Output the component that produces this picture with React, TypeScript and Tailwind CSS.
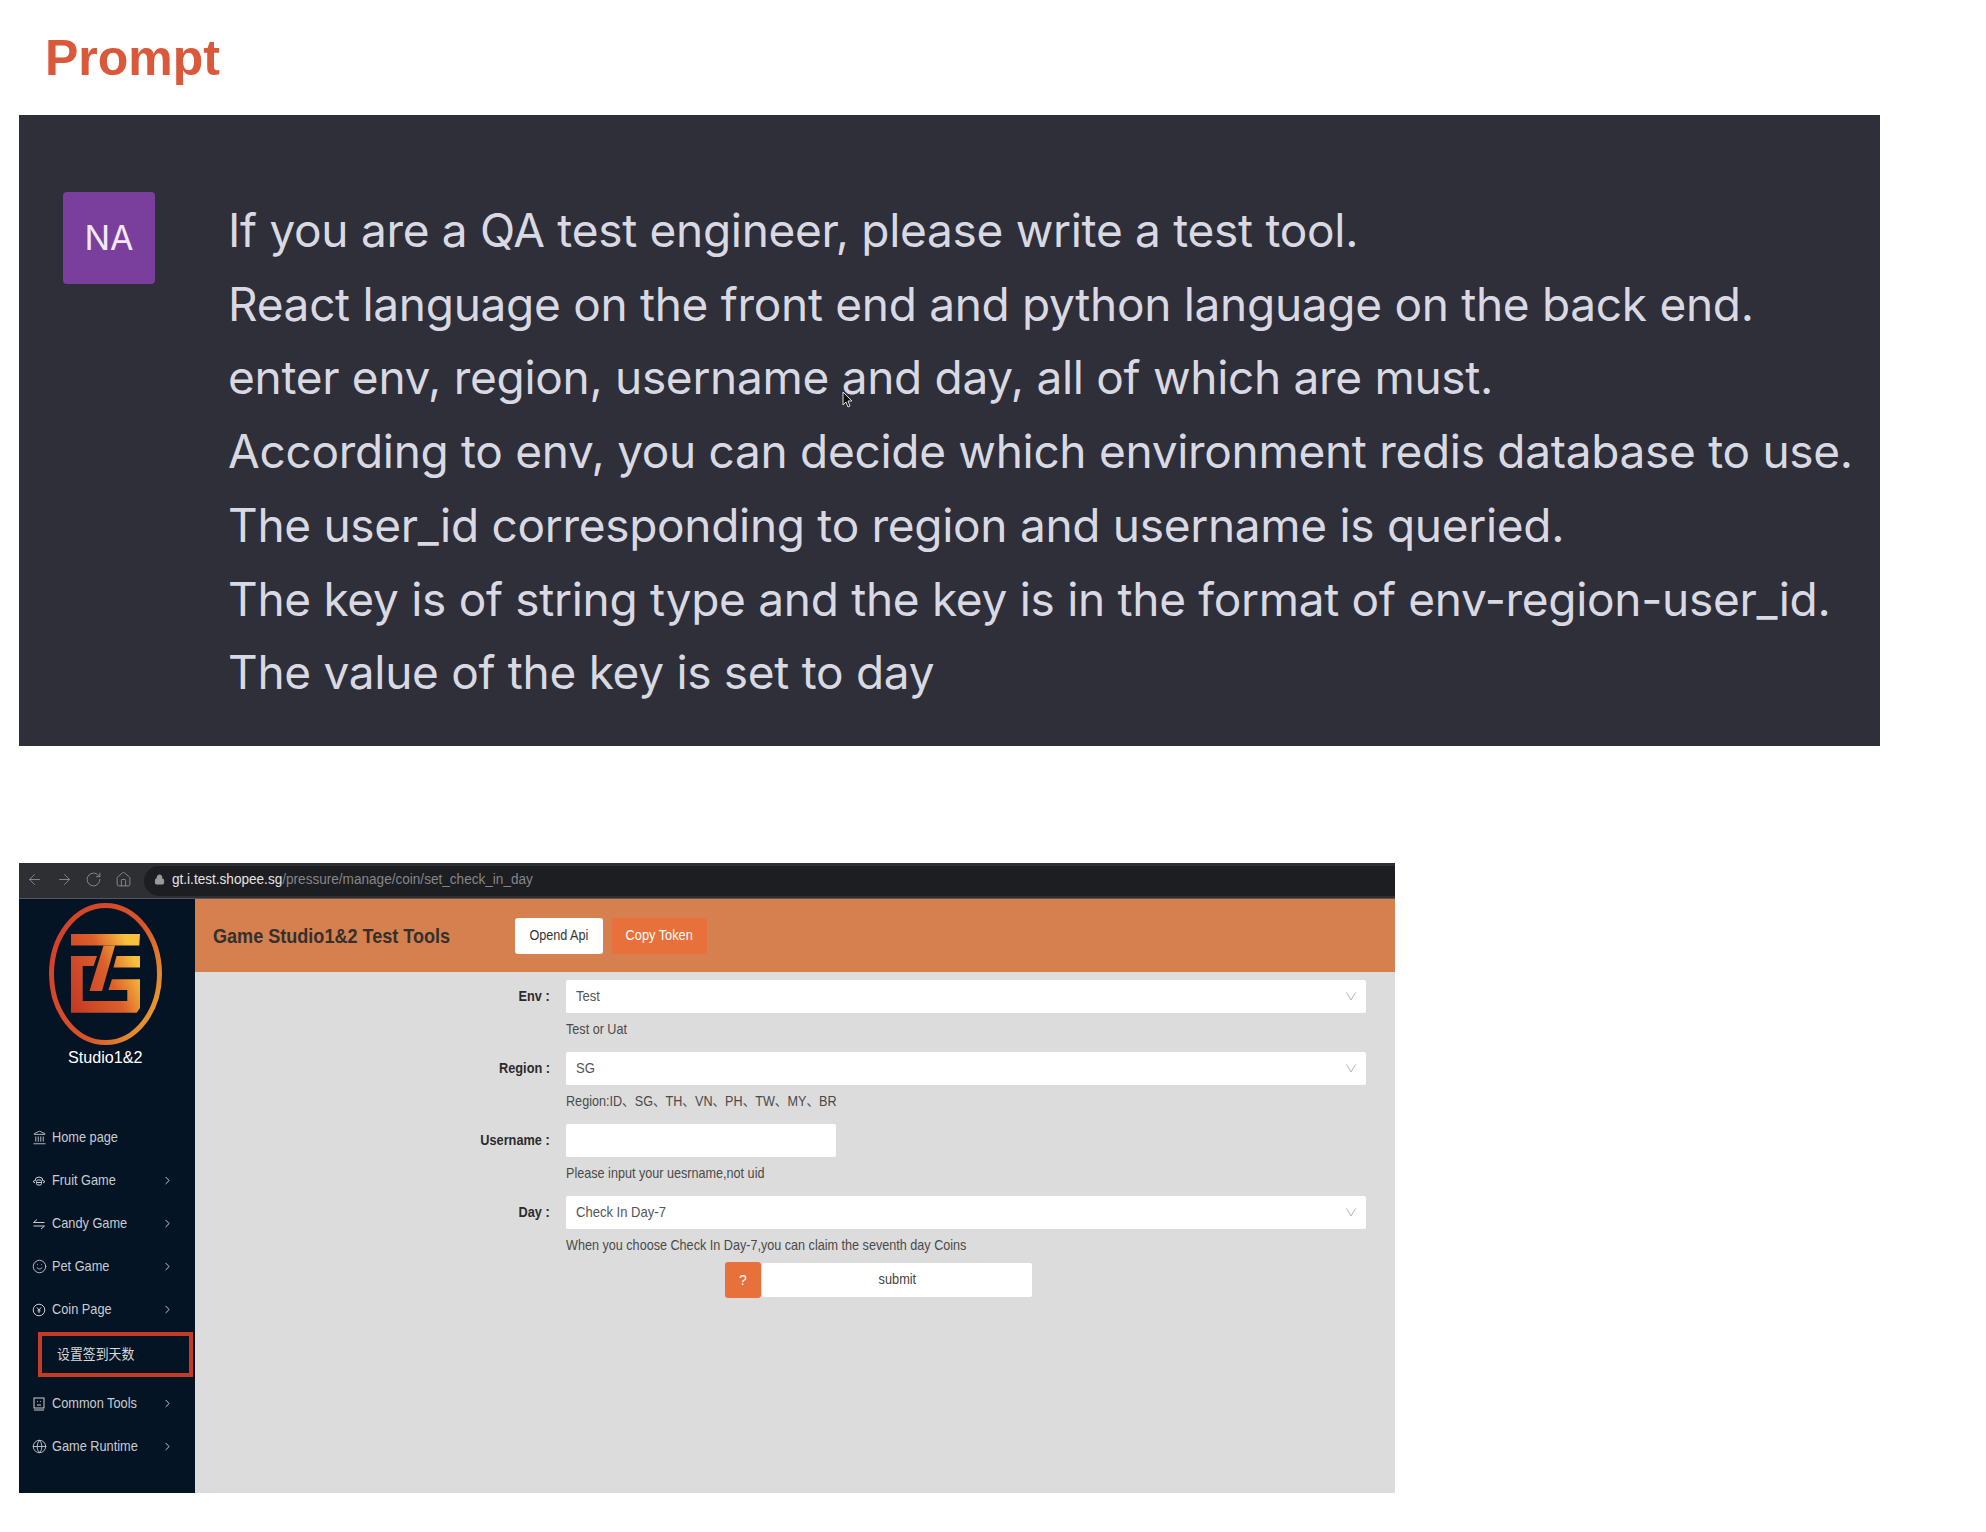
import { ArrowLeft, ArrowRight, ChevronRight, Globe, House, Landmark, Lock, RotateCw, Smile } from "lucide-react";
import type { ReactNode } from "react";

const PROMPT_LINES = [
  "If you are a QA test engineer, please write a test tool.",
  "React language on the front end and python language on the back end.",
  "enter env, region, username and day, all of which are must.",
  "According to env, you can decide which environment redis database to use.",
  "The user_id corresponding to region and username is queried.",
  "The key is of string type and the key is in the format of env-region-user_id.",
  "The value of the key is set to day",
];

function FruitIcon() {
  return (
    <svg viewBox="0 0 14 14" className="h-[14px] w-[14px]" fill="none" stroke="currentColor" strokeWidth="1">
      <path d="M3 7a4 4 0 0 1 8 0" />
      <path d="M3 6.5 1 7.5 3 9M11 6.5l2 1L11 9" />
      <rect x="4.5" y="6" width="5" height="5" rx="1.5" />
      <path d="M4.5 8.5h5" />
    </svg>
  );
}

function CandyIcon() {
  return (
    <svg viewBox="0 0 14 14" className="h-[14px] w-[14px]" fill="none" stroke="currentColor" strokeWidth="1">
      <path d="M1.5 5.5h11M1.5 5.5 5 2.5M1.5 9h11M12.5 9 9 12" />
    </svg>
  );
}

function CoinIcon() {
  return (
    <svg viewBox="0 0 14 14" className="h-[14px] w-[14px]" fill="none" stroke="currentColor" strokeWidth="1">
      <circle cx="7" cy="7" r="5.8" />
      <path d="M5 4.5 7 7l2-2.5M7 7v3M5.5 7.8h3" />
    </svg>
  );
}

function ToolsIcon() {
  return (
    <svg viewBox="0 0 14 14" className="h-[14px] w-[14px]" fill="none" stroke="currentColor" strokeWidth="1">
      <rect x="2" y="1" width="10" height="10" />
      <path d="M5 4.5h.8M8.2 4.5H9M5 8h4M2 13h10" />
    </svg>
  );
}

function SelectArrow() {
  return (
    <svg viewBox="0 0 10 9" className="h-[9px] w-[10px]" fill="none" stroke="#b5b5b5" strokeWidth="1">
      <path d="M.5.5 5 8 9.5.5" />
    </svg>
  );
}

const iconClass = "h-[15px] w-[15px]";

const NAV: { label: string; icon: ReactNode; arrow?: boolean }[] = [
  { label: "Home page", icon: <Landmark className={iconClass} strokeWidth={1.4} /> },
  { label: "Fruit Game", icon: <FruitIcon />, arrow: true },
  { label: "Candy Game", icon: <CandyIcon />, arrow: true },
  { label: "Pet Game", icon: <Smile className={iconClass} strokeWidth={1.4} />, arrow: true },
  { label: "Coin Page", icon: <CoinIcon />, arrow: true },
];

const NAV_BOTTOM: { label: string; icon: ReactNode; arrow?: boolean }[] = [
  { label: "Common Tools", icon: <ToolsIcon />, arrow: true },
  { label: "Game Runtime", icon: <Globe className={iconClass} strokeWidth={1.4} />, arrow: true },
];

function NavRow({ label, icon, arrow }: { label: string; icon: ReactNode; arrow?: boolean }) {
  return (
    <div className="flex h-[43px] items-center pl-[13px] pr-[21px] text-[#c9ccd1]">
      <span className="flex w-[20px] shrink-0">{icon}</span>
      <span className="flex-1 text-[14.5px] leading-none">
        <span className="inline-block origin-left scale-x-[0.88] whitespace-nowrap">{label}</span>
      </span>
      {arrow && <ChevronRight className="h-[13px] w-[13px]" strokeWidth={1.8} />}
    </div>
  );
}

function Logo() {
  return (
    <svg viewBox="0 0 130 155" className="mt-[-3px] ml-[21px] h-[155px] w-[130px]">
      <defs>
        <linearGradient id="ring" x1="0" y1="0.2" x2="1" y2="0.8">
          <stop offset="0" stopColor="#d2402a" />
          <stop offset="0.6" stopColor="#d9552a" />
          <stop offset="1" stopColor="#e9a032" />
        </linearGradient>
        <linearGradient id="glyph" gradientUnits="userSpaceOnUse" x1="30" y1="105" x2="100" y2="75">
          <stop offset="0" stopColor="#c53a26" />
          <stop offset="0.6" stopColor="#dc5f2b" />
          <stop offset="1" stopColor="#f6c23e" />
        </linearGradient>
      </defs>
      <ellipse cx="65.5" cy="78" rx="54" ry="68.5" fill="none" stroke="url(#ring)" strokeWidth="5" />
      <g fill="url(#glyph)">
        <path d="M31 38h69l-.7 11.5H31z" />
        <path d="M63.5 49.5H75L62 95H49.5z" />
        <path d="M31 60h26l-3.4 10H42.7v35h44.6V94H68.5l3.4-10.7H100V112l-3.3 4.7H31z" />
        <path d="M76.5 60H100v11.5H73.5z" />
      </g>
    </svg>
  );
}

function Sidebar() {
  return (
    <aside className="w-[176px] shrink-0 bg-[#041424]">
      <Logo />
      <p className="mt-[-3px] ml-[-4px] text-center text-[17px] leading-[20px] text-white">
        <span className="inline-block scale-x-[0.95]">Studio1&amp;2</span>
      </p>
      <nav className="mt-[48px]">
        {NAV.map((n) => (
          <NavRow key={n.label} {...n} />
        ))}
        <div className="mt-px ml-[19px] mr-[2px] flex h-[45px] items-center border-[4px] border-[#c43c26] pl-[15px] text-[14px] text-[#d6d8db]">
          <span className="inline-block origin-left scale-x-[0.92]">设置签到天数</span>
        </div>
        <div className="mt-[5px]">
          {NAV_BOTTOM.map((n) => (
            <NavRow key={n.label} {...n} />
          ))}
        </div>
      </nav>
    </aside>
  );
}

function Field({ label, help, children }: { label: string; help: string; children: ReactNode }) {
  return (
    <div className="flex">
      <label className="flex h-[33px] w-[355px] shrink-0 items-center justify-end text-[15px] font-bold text-[#2c2c2c]">
        <span className="inline-block origin-right scale-x-[0.85] whitespace-nowrap">{label} :</span>
      </label>
      <div className="ml-[16px] flex-1">
        {children}
        <p className="flex h-[33px] items-center text-[14.5px] text-[#4a4a4a]">
          <span className="inline-block origin-left scale-x-[0.87] whitespace-nowrap">{help}</span>
        </p>
        <div className="h-[6px]" />
      </div>
    </div>
  );
}

function SelectBox({ value }: { value: string }) {
  return (
    <div className="flex h-[33px] items-center justify-between rounded-[2px] bg-white px-[10px] text-[14.5px] text-[#555]">
      <span className="inline-block origin-left scale-x-[0.9] whitespace-nowrap">{value}</span>
      <SelectArrow />
    </div>
  );
}

function Screenshot() {
  return (
    <div className="ml-[19px] w-[1376px]">
      <div className="flex h-[36px] items-center border-b border-[#55565c] bg-[#2e2f33] pl-[7px]">
        <div className="flex items-center gap-[12.5px] pb-[2px] text-[#8a8b8e]">
          <ArrowLeft className="h-[17px] w-[17px]" strokeWidth={1.3} />
          <ArrowRight className="h-[17px] w-[17px]" strokeWidth={1.3} />
          <RotateCw className="h-[17px] w-[17px]" strokeWidth={1.3} />
          <House className="h-[17px] w-[17px]" strokeWidth={1.3} />
        </div>
        <div className="ml-[12px] flex h-[30px] flex-1 items-center rounded-l-[15px] bg-[#1d1e21] pb-[3px] pl-[10px] text-[14px] leading-none">
          <Lock className="h-[11px] w-[11px] text-[#9a9b9e]" fill="#9a9b9e" strokeWidth={2} />
          <span className="ml-[7px] inline-block origin-left scale-x-[0.97] whitespace-nowrap">
            <span className="text-[#e4e4e6]">gt.i.test.shopee.sg</span>
            <span className="text-[#85868a]">/pressure/manage/coin/set_check_in_day</span>
          </span>
        </div>
      </div>
      <div className="flex h-[594px]">
        <Sidebar />
        <div className="flex flex-1 flex-col bg-[#dcdcdc]">
          <header className="flex h-[73px] items-center bg-[#d68050] pl-[18px]">
            <h2 className="w-[302px] text-[21px] font-bold text-[#33302e]">
              <span className="inline-block origin-left scale-x-[0.86] whitespace-nowrap">Game Studio1&amp;2 Test Tools</span>
            </h2>
            <button className="h-[36px] w-[88px] rounded-[3px] bg-white text-[14.5px] text-[#333]">
              <span className="inline-block scale-x-[0.87]">Opend Api</span>
            </button>
            <button className="ml-[9px] h-[36px] w-[95px] rounded-[3px] bg-[#e8703a] text-[14.5px] text-white">
              <span className="inline-block scale-x-[0.88]">Copy Token</span>
            </button>
          </header>
          <div className="pt-[8px] pr-[29px]">
            <Field label="Env" help="Test or Uat">
              <SelectBox value="Test" />
            </Field>
            <Field label="Region" help="Region:ID、SG、TH、VN、PH、TW、MY、BR">
              <SelectBox value="SG" />
            </Field>
            <Field label="Username" help="Please input your uesrname,not uid">
              <div className="h-[33px] w-[270px] rounded-[2px] bg-white" />
            </Field>
            <Field label="Day" help="When you choose Check In Day-7,you can claim the seventh day Coins">
              <SelectBox value="Check In Day-7" />
            </Field>
            <div className="mt-[-6px] ml-[530px] flex items-center">
              <button className="h-[36px] w-[36px] rounded-[3px] bg-[#e8703a] text-[14px] text-white">?</button>
              <button className="ml-px h-[34px] w-[270px] rounded-[2px] bg-white text-[14.5px] text-[#444]">
                <span className="inline-block scale-x-[0.88]">submit</span>
              </button>
            </div>
          </div>
        </div>
      </div>
    </div>
  );
}

export default function App() {
  return (
    <div className="h-[1532px] w-[1986px] bg-white font-['Liberation_Sans','Noto_Sans_CJK_SC',sans-serif]">
      <h1 className="pl-[45px] pt-[29px] text-[50px] font-bold leading-[58px] text-[#d9593a]">Prompt</h1>
      <section className="relative mt-[28px] ml-[19px] flex h-[631px] w-[1861px] bg-[#2e2f38] pl-[44px] pt-[77px]">
        <div className="flex h-[92px] w-[92px] shrink-0 items-center justify-center rounded-[4px] bg-[#7a3f9d] pb-[2px] font-['Inter',sans-serif] text-[34px] text-[#f2e8f6]">
          NA
        </div>
        <div className="ml-[73px] mt-[2px] font-['Inter',sans-serif] text-[46px] leading-[73.7px] tracking-[-0.3px] text-[#d9d9e3]">
          {PROMPT_LINES.map((line) => (
            <p key={line} className="whitespace-nowrap">
              {line}
            </p>
          ))}
        </div>
        <svg viewBox="0 0 12 18" className="absolute left-[823px] top-[276px] h-[18px] w-[12px]">
          <path d="M1 1v13l3-3 2 5 2-1-2-5h4z" fill="#111" stroke="#ddd" strokeWidth="1" />
        </svg>
      </section>
      <div className="mt-[117px]">
        <Screenshot />
      </div>
    </div>
  );
}
